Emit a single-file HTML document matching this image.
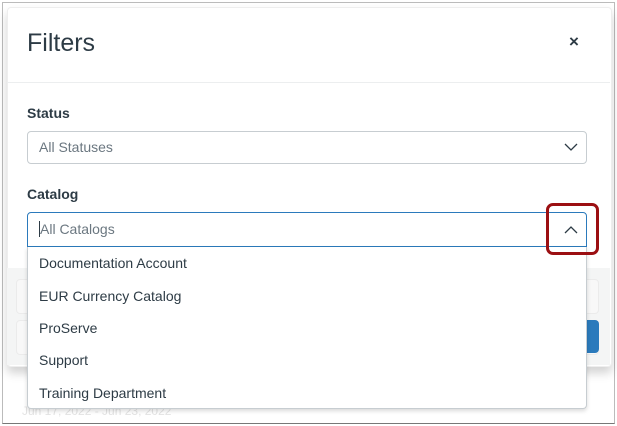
<!DOCTYPE html>
<html><head><style>
body{margin:0;width:617px;height:426px;background:#fff;font-family:"Liberation Sans",sans-serif;position:relative;overflow:hidden}
.frame{position:absolute;left:2px;top:2px;width:611px;height:420px;border:1px solid #bbb;border-bottom:1px solid #777}
.modal{position:absolute;left:7px;top:7px;width:603px;height:358px;background:#fff;border:1px solid #eee;border-radius:4px;box-shadow:0 6px 10px rgba(0,0,0,.18)}
.foot{position:absolute;left:7px;top:268px;width:603px;height:97px;background:#f4f5f5}
.a{position:absolute}
h1{position:absolute;left:27px;top:29px;margin:0;font-weight:normal;font-size:25px;color:#2d3b45}
.sep{position:absolute;left:7px;top:82px;width:603px;height:1px;background:#eceeef}
.lbl{position:absolute;left:27px;font-weight:bold;font-size:14px;color:#2d3b45}
.sel{position:absolute;left:27px;width:560px;border:1px solid #c7cdd1;border-radius:4px;background:#fff;box-sizing:border-box;font-size:14px;color:#6b7780;padding-left:11px}
.list{position:absolute;left:27px;top:247px;width:560px;height:162px;background:#fff;border:1px solid #c7cdd1;border-top:none;border-radius:0 0 4px 4px;box-shadow:0 2px 4px rgba(0,0,0,.15);box-sizing:border-box}
.it{position:absolute;left:11px;font-size:14px;color:#2d3b45}
</style></head><body>
<div class="frame"></div>
<div class="a" style="left:22px;top:404px;font-size:12px;color:#e4e4e4">Jun 17, 2022 - Jun 23, 2022</div>
<div class="modal"></div>
<div class="foot"></div>
<div class="a" style="left:16px;top:279px;width:581px;height:33px;border:1px solid #ebebeb;border-radius:4px;background:#f8f8f8"></div>
<div class="a" style="left:16px;top:320px;width:581px;height:33px;border:1px solid #ebebeb;border-radius:4px;background:#f8f8f8"></div>
<div class="a" style="left:575px;top:320px;width:24px;height:33px;background:#2b7abc;border-radius:0 4px 4px 0"></div>
<h1>Filters</h1>
<div class="a" style="left:569px;top:32px;font-size:17px;font-weight:bold;color:#2d3b45">×</div>
<div class="sep"></div>
<div class="lbl" style="top:105px">Status</div>
<div class="sel" style="top:131px;height:33px;line-height:31px">All Statuses</div>
<svg class="a" style="left:564px;top:142px" width="14" height="10"><path d="M1 2l6 6 6-6" fill="none" stroke="#2d3b45" stroke-width="1.3"/></svg>
<div class="lbl" style="top:186px">Catalog</div>
<div class="sel" style="top:212px;height:35px;line-height:33px;border:1px solid #2b7abc;border-radius:4px 4px 0 0"><span style="border-left:1px solid #2d3b45">All Catalogs</span></div>
<svg class="a" style="left:564px;top:225px" width="14" height="10"><path d="M1 8l6-6 6 6" fill="none" stroke="#2d3b45" stroke-width="1.3"/></svg>
<div class="list">
<div class="it" style="top:8px">Documentation Account</div>
<div class="it" style="top:41px">EUR Currency Catalog</div>
<div class="it" style="top:73px">ProServe</div>
<div class="it" style="top:105px">Support</div>
<div class="it" style="top:138px">Training Department</div>
</div>
<div class="a" style="left:546px;top:203px;width:47px;height:46px;border:3px solid #9b0f12;border-radius:7px"></div>
</body></html>
